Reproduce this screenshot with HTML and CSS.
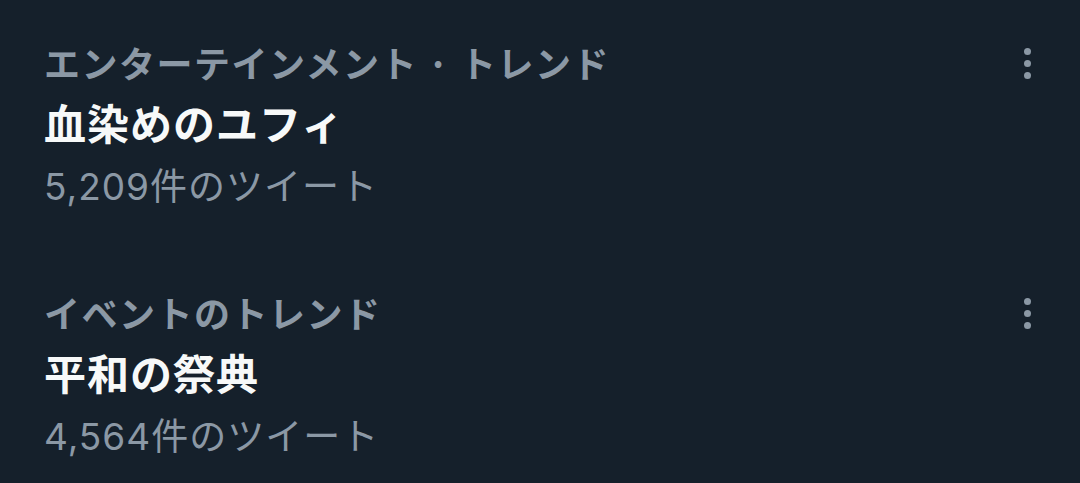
FILE: index.html
```html
<!DOCTYPE html>
<html lang="ja">
<head>
    <meta charset="UTF-8">
    <title>トレンド</title>
    <link rel="stylesheet" href="styles.css">
</head>
<body>
    <div class="trend">
        <div class="trend-body">
            <div class="trend-meta">エンターテインメント · トレンド</div>
            <div class="trend-name">血染めのユフィ</div>
            <div class="trend-count">5,209件のツイート</div>
        </div>
        <button class="more" aria-label="その他">
            <span></span><span></span><span></span>
        </button>
    </div>
    <div class="trend">
        <div class="trend-body">
            <div class="trend-meta">イベントのトレンド</div>
            <div class="trend-name">平和の祭典</div>
            <div class="trend-count">4,564件のツイート</div>
        </div>
        <button class="more" aria-label="その他">
            <span></span><span></span><span></span>
        </button>
    </div>
</body>
</html>
```

FILE: styles.css
```css
body {
    margin: 0;
    padding: 0;
    background: #15202b;
    font-family: "Noto Sans CJK JP", "Noto Sans", sans-serif;
    color: #8b98a5;
}
.trend {
    display: flex;
    justify-content: space-between;
    align-items: flex-start;
    height: 250px;
    box-sizing: border-box;
    padding: 37px 49px 0 44px;
}
.trend-meta {
    font-size: 36px;
    font-weight: 700;
    letter-spacing: 1.5px;
    line-height: 50px;
}
.trend-name {
    color: #f7f9f9;
    font-size: 42px;
    font-weight: 700;
    letter-spacing: 1px;
    line-height: 70px;
}
.trend-count {
    margin-top: 10px;
    font-family: "Inter", "Noto Sans CJK JP", sans-serif;
    font-size: 37px;
    letter-spacing: 1px;
    line-height: 40px;
}
.more {
    display: flex;
    flex-direction: column;
    gap: 5px;
    padding: 0;
    margin-top: 11px;
    background: none;
    border: none;
}
.more span {
    width: 7px;
    height: 7px;
    border-radius: 50%;
    background: #8b98a5;
}
```
